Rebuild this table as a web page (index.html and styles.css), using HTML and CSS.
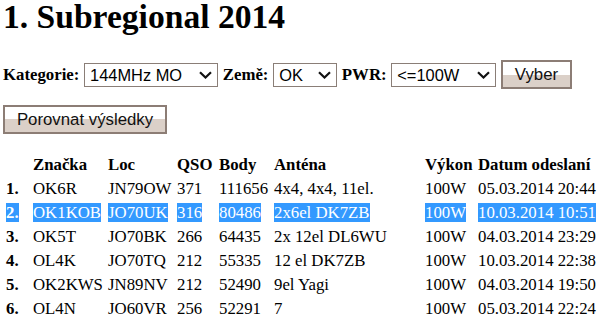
FILE: index.html
```html
<!DOCTYPE html>
<html lang="cs">
<head>
<meta charset="utf-8">
<title>1. Subregional 2014</title>
<link rel="stylesheet" href="styles.css">
</head>
<body>
<h1 class="title">1. Subregional 2014</h1>
<form class="filters">
  <label class="lbl" for="kat">Kategorie:</label>
  <span class="sel-wrap w-kat">
    <select id="kat" class="sel"><option>144MHz MO</option></select>
    <svg class="chev" width="13" height="8" viewBox="0 0 13 8"><path d="M1 1.2 L6.5 6.5 L12 1.2" fill="none" stroke="#111" stroke-width="2.2"/></svg>
  </span>
  <label class="lbl" for="zeme">Země:</label>
  <span class="sel-wrap w-zeme">
    <select id="zeme" class="sel"><option>OK</option></select>
    <svg class="chev" width="13" height="8" viewBox="0 0 13 8"><path d="M1 1.2 L6.5 6.5 L12 1.2" fill="none" stroke="#111" stroke-width="2.2"/></svg>
  </span>
  <label class="lbl" for="pwr">PWR:</label>
  <span class="sel-wrap w-pwr">
    <select id="pwr" class="sel"><option>&lt;=100W</option></select>
    <svg class="chev" width="13" height="8" viewBox="0 0 13 8"><path d="M1 1.2 L6.5 6.5 L12 1.2" fill="none" stroke="#111" stroke-width="2.2"/></svg>
  </span>
  <button type="button" class="btn btn-vyber">Vyber</button>
</form>
<div class="compare">
  <button type="button" class="btn btn-compare">Porovnat výsledky</button>
</div>
<table class="results">
  <colgroup>
    <col class="c-no"><col class="c-call"><col class="c-loc"><col class="c-qso"><col class="c-body"><col class="c-ant"><col class="c-pwr"><col class="c-date">
  </colgroup>
  <thead>
    <tr><th></th><th>Značka</th><th>Loc</th><th>QSO</th><th>Body</th><th>Anténa</th><th>Výkon</th><th>Datum odeslaní</th></tr>
  </thead>
  <tbody>
    <tr><th>1.</th><td>OK6R</td><td>JN79OW</td><td>371</td><td>111656</td><td>4x4, 4x4, 11el.</td><td>100W</td><td>05.03.2014 20:44</td></tr>
    <tr class="picked"><th><span class="hl">2.</span></th><td><span class="hl">OK1KOB</span></td><td><span class="hl">JO70UK</span></td><td><span class="hl">316</span></td><td><span class="hl">80486</span></td><td><span class="hl">2x6el DK7ZB</span></td><td><span class="hl">100W</span></td><td><span class="hl">10.03.2014 10:51</span></td></tr>
    <tr><th>3.</th><td>OK5T</td><td>JO70BK</td><td>266</td><td>64435</td><td>2x 12el DL6WU</td><td>100W</td><td>04.03.2014 23:29</td></tr>
    <tr><th>4.</th><td>OL4K</td><td>JO70TQ</td><td>212</td><td>55335</td><td>12 el DK7ZB</td><td>100W</td><td>10.03.2014 22:38</td></tr>
    <tr><th>5.</th><td>OK2KWS</td><td>JN89NV</td><td>212</td><td>52490</td><td>9el Yagi</td><td>100W</td><td>04.03.2014 19:50</td></tr>
    <tr><th>6.</th><td>OL4N</td><td>JO60VR</td><td>256</td><td>52291</td><td>7</td><td>100W</td><td>05.03.2014 22:24</td></tr>
  </tbody>
</table>
</body>
</html>
```
FILE: styles.css
```css
html, body {
  margin: 0;
  background: #ffffff;
}
body {
  padding: 0 0 0 3px;
  font-family: "Liberation Serif", "Times New Roman", serif;
  font-size: 16.8px;
  color: #000;
  overflow: hidden;
}
.title {
  margin: 0;
  padding-top: 1px;
  font-size: 33.6px;
  line-height: 32px;
  font-weight: bold;
  white-space: nowrap;
}
.filters {
  margin: 27px 0 0 0;
  display: flex;
  align-items: center;
  gap: 4.7px;
  height: 29px;
}
.lbl {
  font-weight: bold;
  white-space: nowrap;
}
.sel-wrap {
  position: relative;
  display: block;
  height: 24px;
}
.w-kat { width: 134px; }
.w-zeme { width: 64px; }
.w-pwr { width: 105px; }
.sel {
  appearance: none;
  -webkit-appearance: none;
  box-sizing: border-box;
  width: 100%;
  height: 24px;
  margin: 0;
  border: 1px solid #8a7e77;
  border-radius: 0;
  background: #fff;
  padding: 0 0 0 5px;
  font-family: "Liberation Sans", Arial, sans-serif;
  font-size: 16.4px;
  color: #000;
}
.chev {
  position: absolute;
  right: 6px;
  top: 8px;
  pointer-events: none;
}
.btn {
  box-sizing: border-box;
  height: 29px;
  margin: 0;
  border: 2px solid #8c7d75;
  border-radius: 0;
  background: linear-gradient(#ffffff 0, #ffffff 50%, #dbd0c8 50%, #dbd0c8 100%);
  font-family: "Liberation Sans", Arial, sans-serif;
  font-size: 16.8px;
  color: #111;
  padding: 0 10px;
  white-space: nowrap;
}
.btn-vyber {
  width: 71px;
}
.btn-compare {
  width: 164px;
}
.compare {
  margin-top: 16px;
  height: 29px;
  display: flex;
}
.results {
  margin: 19px 0 0 3px;
  border-collapse: collapse;
  border-spacing: 0;
  table-layout: fixed;
  width: 591px;
}
.c-no { width: 27px; }
.c-call { width: 75px; }
.c-loc { width: 69px; }
.c-qso { width: 42px; }
.c-body { width: 55px; }
.c-ant { width: 151px; }
.c-pwr { width: 53px; }
.c-date { width: 119px; }
.results th,
.results td {
  padding: 0;
  height: 24px;
  line-height: 24px;
  text-align: left;
  white-space: nowrap;
  vertical-align: middle;
}
.results th {
  font-weight: bold;
}
.results td {
  font-weight: normal;
}
.hl {
  background: #3399ff;
  color: #fff;
}
```
